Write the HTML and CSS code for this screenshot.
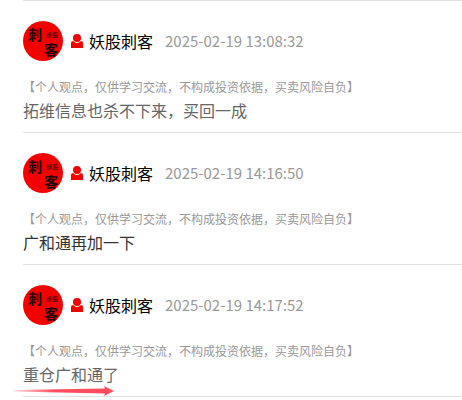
FILE: index.html
```
<!DOCTYPE html>
<html lang="zh-CN">
<head>
    <meta charset="UTF-8">
    <meta name="viewport" content="width=device-width, initial-scale=1">
    <title>妖股刺客</title>
    <link rel="stylesheet" href="styles.css">
</head>
<body>
    <div class="posts">
        <div class="post">
            <div class="post-header">
                <svg class="avatar" viewBox="0 0 40 40">
                    <circle cx="20" cy="20" r="20"/>
                    <text class="avatar-big" x="5" y="19">刺</text>
                    <text class="avatar-big" x="21" y="34">客</text>
                    <text class="avatar-small" x="23" y="16">妖股</text>
                </svg>
                <svg class="user-icon" viewBox="0 0 12 14">
                    <circle cx="6" cy="4" r="4"/>
                    <path d="M0 14V9Q0 7 2 7Q6 11 10 7Q12 7 12 9V14Z"/>
                </svg>
                <span class="author">妖股刺客</span>
                <time class="time">2025-02-19 13:08:32</time>
            </div>
            <p class="notice">【个人观点，仅供学习交流，不构成投资依据，买卖风险自负】</p>
            <p class="content">拓维信息也杀不下来，买回一成</p>
        </div>

        <div class="post">
            <div class="post-header">
                <svg class="avatar" viewBox="0 0 40 40">
                    <circle cx="20" cy="20" r="20"/>
                    <text class="avatar-big" x="5" y="19">刺</text>
                    <text class="avatar-big" x="21" y="34">客</text>
                    <text class="avatar-small" x="23" y="16">妖股</text>
                </svg>
                <svg class="user-icon" viewBox="0 0 12 14">
                    <circle cx="6" cy="4" r="4"/>
                    <path d="M0 14V9Q0 7 2 7Q6 11 10 7Q12 7 12 9V14Z"/>
                </svg>
                <span class="author">妖股刺客</span>
                <time class="time">2025-02-19 14:16:50</time>
            </div>
            <p class="notice">【个人观点，仅供学习交流，不构成投资依据，买卖风险自负】</p>
            <p class="content dark">广和通再加一下</p>
        </div>

        <div class="post">
            <div class="post-header">
                <svg class="avatar" viewBox="0 0 40 40">
                    <circle cx="20" cy="20" r="20"/>
                    <text class="avatar-big" x="5" y="19">刺</text>
                    <text class="avatar-big" x="21" y="34">客</text>
                    <text class="avatar-small" x="23" y="16">妖股</text>
                </svg>
                <svg class="user-icon" viewBox="0 0 12 14">
                    <circle cx="6" cy="4" r="4"/>
                    <path d="M0 14V9Q0 7 2 7Q6 11 10 7Q12 7 12 9V14Z"/>
                </svg>
                <span class="author">妖股刺客</span>
                <time class="time">2025-02-19 14:17:52</time>
            </div>
            <p class="notice">【个人观点，仅供学习交流，不构成投资依据，买卖风险自负】</p>
            <p class="content">重仓广和通了</p>
            <svg class="arrow" viewBox="0 0 100 10">
                <defs>
                    <linearGradient id="arrow-fade">
                        <stop offset="0" stop-color="#ff4d5e" stop-opacity="0.2"/>
                        <stop offset="0.4" stop-color="#ff4d5e"/>
                    </linearGradient>
                </defs>
                <path d="M0 4L91 2.500L90 0L100 5L90 10L91 7.500L0 5.500Z" fill="url(#arrow-fade)"/>
            </svg>
        </div>
    </div>
</body>
</html>
```
FILE: styles.css
```
body {
    margin: 0;
    background: #fff;
    font-family: "Noto Sans CJK SC", sans-serif;
    font-size: 16px;
    line-height: 24px;
    color: #000;
}

.posts {
    margin-left: 23px;
    border-top: 1px solid #e2e2e2;
}

.post {
    position: relative;
    padding: 20px 0 11px;
    border-bottom: 1px solid #e2e2e2;
}

.post-header {
    display: flex;
    align-items: center;
    margin-bottom: 14px;
}

.avatar {
    width: 40px;
    height: 40px;
    margin-right: 8px;
    fill: #230000;
}

.avatar circle {
    fill: #f40000;
}

.avatar-big {
    font-size: 14px;
    font-weight: 700;
}

.avatar-small {
    font-size: 6px;
}

.user-icon {
    width: 12px;
    height: 14px;
    margin-right: 6px;
    fill: #f40000;
}

.author {
    margin-right: 12px;
}

.time {
    font-size: 15px;
    color: #999;
}

.notice,
.content {
    margin: 0;
}

.notice {
    font-size: 12px;
    color: #999;
}

.content {
    line-height: 22px;
    color: #666;
}

.content.dark {
    color: #333;
}

/* hand-drawn marker under the last post */
.arrow {
    position: absolute;
    left: -9px;
    bottom: 0;
    width: 100px;
    height: 10px;
}
```
